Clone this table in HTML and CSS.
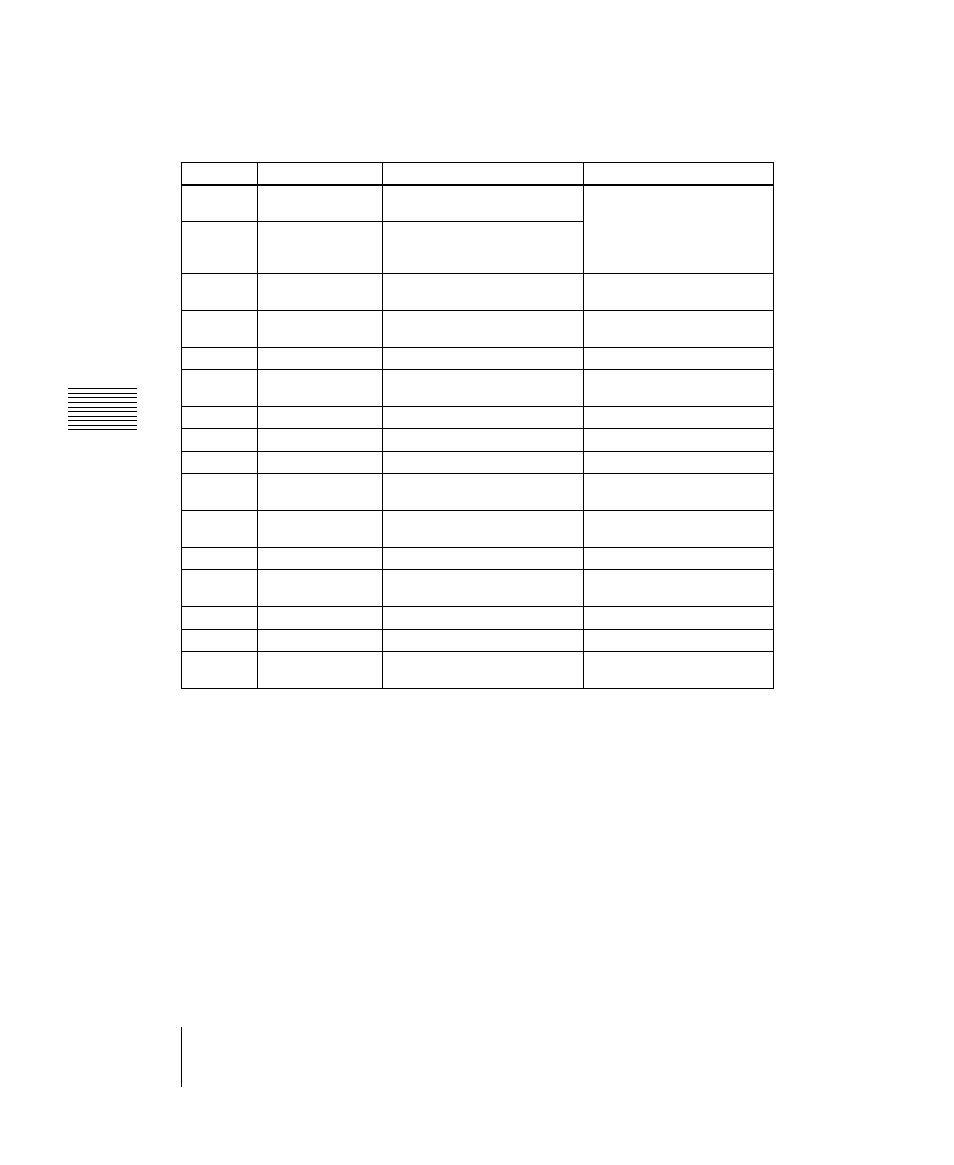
FILE: index.html
```html
<!DOCTYPE html>
<html lang="en">
<head>
<meta charset="utf-8">
<title>Table</title>
<link rel="stylesheet" href="styles.css">
</head>
<body>
<div class="page">
  <div class="layout">
    <div class="margin-col">
      <svg class="tab-marker" width="69" height="43" viewBox="0 0 69 43" shape-rendering="crispEdges" aria-hidden="true">
        <rect x="0" y="0" width="69" height="1"/>
        <rect x="0" y="5" width="69" height="1"/>
        <rect x="0" y="9" width="69" height="1"/>
        <rect x="0" y="14" width="69" height="1"/>
        <rect x="0" y="19" width="69" height="1"/>
        <rect x="0" y="23" width="69" height="1"/>
        <rect x="0" y="28" width="69" height="1"/>
        <rect x="0" y="32" width="69" height="1"/>
        <rect x="0" y="37" width="69" height="1"/>
        <rect x="0" y="41" width="69" height="1"/>
      </svg>
    </div>
    <div class="grid-table">
      <div class="cell head"></div><div class="cell head"></div><div class="cell head"></div><div class="cell head"></div>
      <div class="cell"></div><div class="cell"></div><div class="cell"></div><div class="cell span2"></div>
      <div class="cell"></div><div class="cell"></div><div class="cell"></div>
      <div class="cell"></div><div class="cell"></div><div class="cell"></div><div class="cell"></div>
      <div class="cell"></div><div class="cell"></div><div class="cell"></div><div class="cell"></div>
      <div class="cell"></div><div class="cell"></div><div class="cell"></div><div class="cell"></div>
      <div class="cell"></div><div class="cell"></div><div class="cell"></div><div class="cell"></div>
      <div class="cell"></div><div class="cell"></div><div class="cell"></div><div class="cell"></div>
      <div class="cell"></div><div class="cell"></div><div class="cell"></div><div class="cell"></div>
      <div class="cell"></div><div class="cell"></div><div class="cell"></div><div class="cell"></div>
      <div class="cell"></div><div class="cell"></div><div class="cell"></div><div class="cell"></div>
      <div class="cell"></div><div class="cell"></div><div class="cell"></div><div class="cell"></div>
      <div class="cell"></div><div class="cell"></div><div class="cell"></div><div class="cell"></div>
      <div class="cell"></div><div class="cell"></div><div class="cell"></div><div class="cell"></div>
      <div class="cell"></div><div class="cell"></div><div class="cell"></div><div class="cell"></div>
      <div class="cell"></div><div class="cell"></div><div class="cell"></div><div class="cell"></div>
      <div class="cell"></div><div class="cell"></div><div class="cell"></div><div class="cell"></div>
    </div>
  </div>
  <div class="footer-rule"></div>
</div>
</body>
</html>
```
FILE: styles.css
```css
html, body {
  margin: 0;
  padding: 0;
  background: #ffffff;
  font-family: "Liberation Sans", Arial, sans-serif;
}

.page {
  width: 954px;
  min-height: 1165px;
  padding-top: 162px;
  box-sizing: border-box;
}

.layout {
  display: flex;
  align-items: flex-start;
}

.margin-col {
  width: 181px;
  flex: none;
}

.tab-marker {
  display: block;
  margin-top: 226px;
  margin-left: 68px;
  fill: #000000;
}

.grid-table {
  display: grid;
  grid-template-columns: 76px 125px 201px 190px;
  grid-template-rows: 23px 36px 52px 37px 37px 22px 37px 22px 23px 22px 37px 37px 22px 37px 23px 22px 37px;
  border-top: 1px solid #000000;
  border-left: 1px solid #000000;
}

.cell {
  box-sizing: border-box;
  border-right: 1px solid #000000;
  border-bottom: 1px solid #000000;
}

.cell.head {
  border-bottom-width: 2px;
}

.cell.span2 {
  grid-row: span 2;
}

.footer-rule {
  width: 1px;
  height: 60px;
  margin-left: 181px;
  margin-top: 338px;
  background: #000000;
}
```
